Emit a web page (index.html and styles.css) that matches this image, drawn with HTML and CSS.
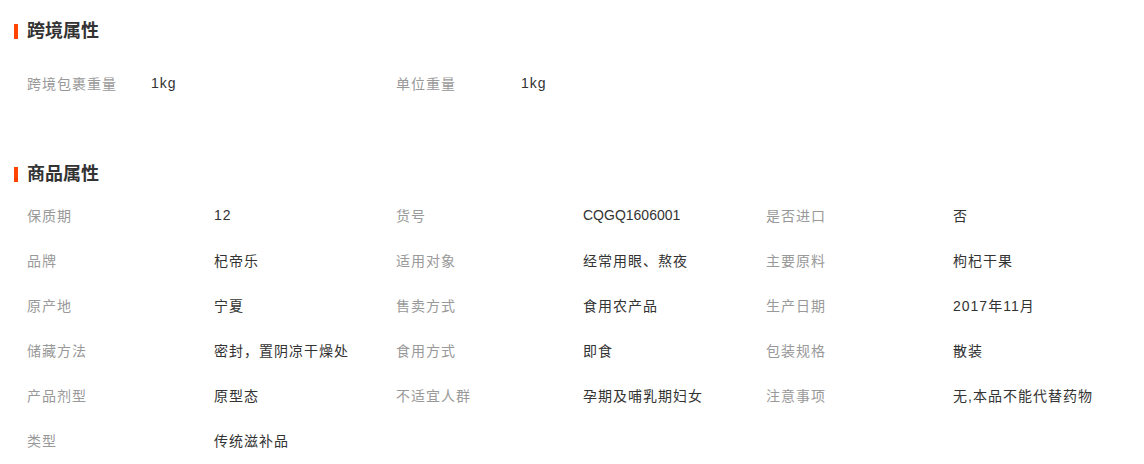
FILE: index.html
```html
<!DOCTYPE html>
<html lang="zh-CN">
<head>
  <meta charset="UTF-8">
  <title>商品属性</title>
  <link rel="stylesheet" href="styles.css">
</head>
<body>
<div class="attrs">
  <!-- 跨境属性 -->
  <h2 class="attr-title"><span class="bar"></span>跨境属性</h2>
  <div class="attr-grid cross">
    <span class="label">跨境包裹重量</span><span class="value">1kg</span>
    <span class="label">单位重量</span><span class="value">1kg</span>
  </div>

  <!-- 商品属性 -->
  <h2 class="attr-title second"><span class="bar"></span>商品属性</h2>
  <div class="attr-grid goods">
    <span class="label">保质期</span><span class="value">12</span>
    <span class="label">货号</span><span class="value code">CQGQ1606001</span>
    <span class="label">是否进口</span><span class="value">否</span>

    <span class="label">品牌</span><span class="value">杞帝乐</span>
    <span class="label">适用对象</span><span class="value">经常用眼、熬夜</span>
    <span class="label">主要原料</span><span class="value">枸杞干果</span>

    <span class="label">原产地</span><span class="value">宁夏</span>
    <span class="label">售卖方式</span><span class="value">食用农产品</span>
    <span class="label">生产日期</span><span class="value">2017年11月</span>

    <span class="label">储藏方法</span><span class="value">密封，置阴凉干燥处</span>
    <span class="label">食用方式</span><span class="value">即食</span>
    <span class="label">包装规格</span><span class="value">散装</span>

    <span class="label">产品剂型</span><span class="value">原型态</span>
    <span class="label">不适宜人群</span><span class="value">孕期及哺乳期妇女</span>
    <span class="label">注意事项</span><span class="value">无,本品不能代替药物</span>

    <span class="label">类型</span><span class="value">传统滋补品</span>
  </div>
</div>
</body>
</html>
```

FILE: styles.css
```css
* {
  margin: 0;
  padding: 0;
}
html,body {
  width: 100%;
  height: 100%;
  background: #fff;
}
body {
  font-family: "Liberation Sans", "Noto Sans CJK SC", sans-serif;
  font-size: 14px;
  color: #333;
}

.attrs {
  padding-top: 21px;
}

.attr-title {
  display: flex;
  align-items: center;
  margin-left: 14px;
  height: 20px;
  line-height: 20px;
  font-size: 18px;
  font-weight: bold;
  color: #333;
}
.attr-title .bar {
  width: 4px;
  height: 15px;
  margin-right: 9px;
  background-color: #ff4400;
}
.attr-title.second {
  margin-top: 71px;
}

.attr-grid {
  display: grid;
  padding-left: 27px;
  align-items: center;
}
.cross {
  margin-top: 32px;
  grid-template-columns: 124px 245px 125px 1fr;
  grid-auto-rows: 20px;
}
.goods {
  margin-top: 8px;
  grid-template-columns: 187px 182px 187px 183px 187px 1fr;
  grid-auto-rows: 45px;
}

.label {
  color: #999;
  letter-spacing: 1px;
  white-space: nowrap;
}
.value {
  color: #333;
  letter-spacing: 1px;
  white-space: nowrap;
}
.value.code {
  letter-spacing: 0;
}
```
